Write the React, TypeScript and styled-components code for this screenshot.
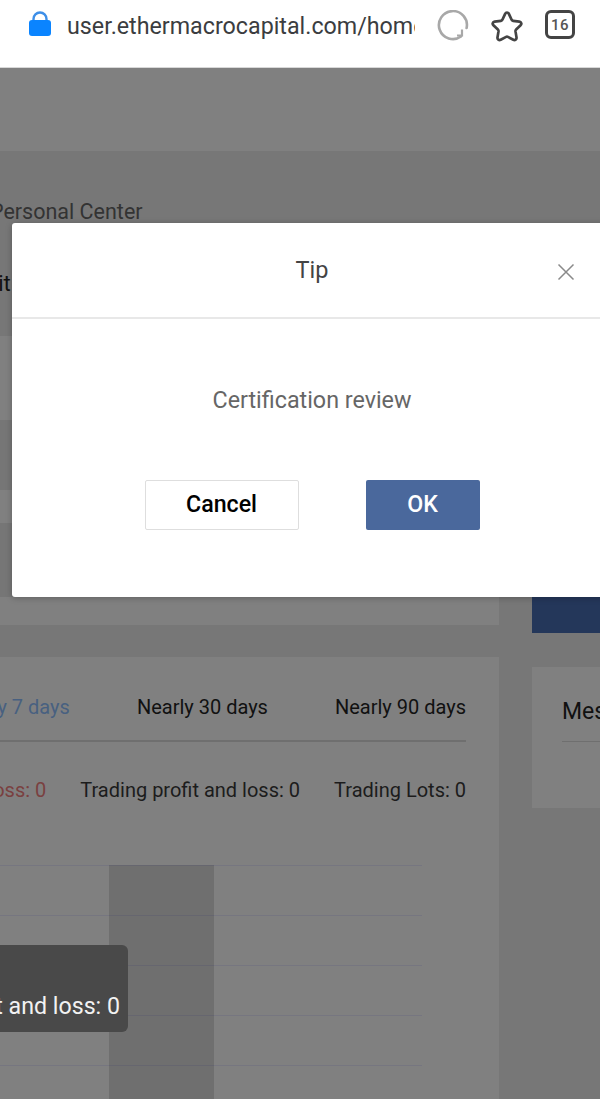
import React from "react";
import styled, { createGlobalStyle } from "styled-components";

const Global = createGlobalStyle`
  html, body { margin: 0; padding: 0; background: #fff; }
  body { font-family: Roboto, "Liberation Sans", sans-serif; width: 600px; height: 1106px; overflow: hidden; }
`;
const Screen = styled.div`
  width: 600px; height: 1106px; display: flex; flex-direction: column; background: #fff; overflow: hidden;
`;
const AddressBar = styled.header`
  height: 68px; flex: none; box-sizing: border-box; display: flex; align-items: flex-start;
  padding: 10px 0 0 28px; background: #fff; border-bottom: 1px solid #d8d8d8;
`;
const LockIcon = styled.svg`flex: none; margin-top: 1px;`;
const UrlText = styled.div`
  width: 348px; margin: 0 2px 0 15px; overflow: hidden; white-space: nowrap;
  font-size: 23.25px; line-height: 33px; color: #3b3d40;
`;
const BarIcon = styled.svg<{ $gap: number }>`
  flex: none; margin-left: ${p => p.$gap}px;
`;
const TabCounter = styled.div`
  flex: none; margin-left: 21px; width: 30px; height: 29px; box-sizing: border-box;
  border: 3px solid #444; border-radius: 6px; display: flex; align-items: center; justify-content: center;
  font-size: 15px; font-weight: 500; color: #555; letter-spacing: .5px;
`;
const Viewport = styled.main`
  position: relative; height: 1031px; flex: none; overflow: hidden; background: #777;
`;
const SiteHeader = styled.div`height: 83px; background: #808080;`;
const Body = styled.div`
  display: grid; grid-template-columns: 499px 68px; column-gap: 33px; padding-top: 47px;
`;
const Left = styled.div`display: flex; flex-direction: column; min-width: 0;`;
const Crumb = styled.div`
  font-size: 21.5px; line-height: 28px; color: #333; margin-left: -10px; white-space: nowrap;
`;
const PageTitle = styled.div`
  font-size: 22px; line-height: 30px; color: #111; margin: 43px 0 0 -15px; white-space: nowrap; height: 67px;
`;
const InfoCard = styled.div`
  height: 289px; background: #808080; display: flex; flex-direction: column;
`;
const InfoRow = styled.div<{ $h: number; $shade?: boolean }>`
  height: ${p => p.$h}px; flex: none; background: ${p => (p.$shade ? "#767676" : "transparent")};
`;
const ChartCard = styled.section`
  margin-top: 32px; height: 460px; padding-right: 33px; background: #808080; position: relative;
`;
const Tabs = styled.div`
  height: 85px; box-sizing: border-box; padding-top: 36px; display: flex; justify-content: flex-end; gap: 67px;
  border-bottom: 2px solid #6f6f6f; font-size: 20px; line-height: 28px; white-space: nowrap;
`;
const Tab = styled.span<{ $active?: boolean }>`
  flex: none; color: ${p => (p.$active ? "#486080" : "#111")};
`;
const Stats = styled.div`
  display: flex; justify-content: flex-end; gap: 34px; padding-top: 34px; font-size: 20px; line-height: 28px; white-space: nowrap;
`;
const Stat = styled.span<{ $loss?: boolean }>`
  flex: none; color: ${p => (p.$loss ? "#7a4040" : "#1c1c1c")};
`;
const Plot = styled.div`
  position: absolute; left: 0; top: 208px; width: 422px; height: 240px;
  display: flex; flex-direction: column;
`;
const GridLine = styled.div`height: 50px; box-sizing: border-box; border-top: 1px solid #767680; flex: none;`;
const Band = styled.div`
  position: absolute; left: 109px; top: 0; width: 105px; height: 240px; background: rgba(0,0,0,.13);
`;
const Tooltip = styled.div`
  position: absolute; left: -20px; top: 80px; width: 148px; height: 87px; box-sizing: border-box;
  border-radius: 6px; background: #494949; color: #f2f2f2; font-size: 23.2px; line-height: 30px;
  display: flex; justify-content: flex-end; align-items: flex-end; padding: 0 8px 11px 0; white-space: nowrap;
`;
const Right = styled.aside`display: flex; flex-direction: column; margin-top: -1px;`;
const ActionSlot = styled.div`height: 436px; display: flex; align-items: flex-end;`;
const DepositButton = styled.div`height: 50px; width: 100%; background: #24375a;`;
const MessageCard = styled.section`
  margin-top: 34px; height: 141px; background: #808080; padding: 30px 0 0 30px; box-sizing: border-box; overflow: hidden;
`;
const MessageTitle = styled.div`
  font-size: 23px; line-height: 30px; color: #111; white-space: nowrap; height: 44px; border-bottom: 1px solid #6f6f6f;
`;
const Dialog = styled.div`
  position: absolute; left: 12px; top: 155px; width: 620px; height: 374px; background: #fff; border-radius: 3px;
  box-shadow: 0 1px 6px rgba(0,0,0,.25);
`;
const DialogHead = styled.div`
  height: 96px; box-sizing: border-box; border-bottom: 2px solid #e8e8e8; position: relative;
  width: 600px; display: flex; justify-content: center; padding: 32px 0 0 0;
  font-size: 23.5px; line-height: 30px; color: #444;
`;
const CloseButton = styled.svg`position: absolute; left: 545px; top: 40px;`;
const Message = styled.div`
  width: 600px; text-align: center; margin-top: 66px; font-size: 23.3px; line-height: 30px; color: #666;
`;
const Actions = styled.div`
  width: 600px; display: flex; justify-content: center; gap: 67px; margin-top: 65px;
`;
const Button = styled.div<{ $primary?: boolean }>`
  height: 50px; box-sizing: border-box; display: flex; align-items: center; justify-content: center; border-radius: 2px;
  padding-bottom: 2px; width: ${p => (p.$primary ? 114 : 154)}px;
  background: ${p => (p.$primary ? "#4a689c" : "#fff")};
  color: ${p => (p.$primary ? "#fff" : "#000")};
  border: ${p => (p.$primary ? "none" : "1px solid #dedede")};
  font-size: 23.2px; font-weight: 500;
`;

export default function App() {
  return (
    <Screen>
      <Global />
      <AddressBar>
        <LockIcon width="24" height="28" viewBox="0 0 24 28">
          <path d="M5.5 11V8a6.5 6.5 0 0 1 13 0v3" fill="none" stroke="#3d8fe8" strokeWidth="2.4" />
          <rect x="1" y="9" width="22" height="16" rx="3" fill="#0a84ff" />
        </LockIcon>
        <UrlText>user.ethermacrocapital.com/home</UrlText>
        <BarIcon $gap={20} width="32" height="32" viewBox="0 0 32 32">
          <path d="M24 26.5A14 14 0 1 1 29.6 18" fill="none" stroke="#a8a8a8" strokeWidth="2.6" strokeLinecap="round" />
          <path d="M25 19.5v6h-5" fill="none" stroke="#a8a8a8" strokeWidth="2.2" />
        </BarIcon>
        <BarIcon $gap={21} width="34" height="32" viewBox="0 0 34 32">
          <path d="M17 2.5c1 0 1.6.7 2 1.6l2.600 5.600c.3.6.8 1 1.500 1.100l6.200.9c2 .3 2.700 2.300 1.300 3.600l-4.500 4.300c-.5.5-.7 1.100-.6 1.800l1 6c.3 1.900-1.500 3.200-3.200 2.300l-5.400-2.800c-.6-.3-1.200-.3-1.800 0l-5.400 2.800c-1.700.9-3.500-.4-3.200-2.300l1-6c.1-.7-.1-1.300-.6-1.800l-4.500-4.300c-1.400-1.300-.7-3.300 1.300-3.600l6.200-.9c.7-.1 1.200-.5 1.500-1.100l2.600-5.600c.4-.9 1-1.600 2-1.600z" fill="none" stroke="#444" strokeWidth="2.7" strokeLinejoin="round" />
        </BarIcon>
        <TabCounter>16</TabCounter>
      </AddressBar>
      <Viewport>
        <SiteHeader />
        <Body>
          <Left>
            <Crumb>Personal Center</Crumb>
            <PageTitle>Tit</PageTitle>
            <InfoCard>
              <InfoRow $h={84} />
              <InfoRow $h={70} $shade />
              <InfoRow $h={33} />
              <InfoRow $h={74} $shade />
            </InfoCard>
            <ChartCard>
              <Tabs>
                <Tab $active>Nearly 7 days</Tab>
                <Tab>Nearly 30 days</Tab>
                <Tab>Nearly 90 days</Tab>
              </Tabs>
              <Stats>
                <Stat $loss>Profit and loss: 0</Stat>
                <Stat>Trading profit and loss: 0</Stat>
                <Stat>Trading Lots: 0</Stat>
              </Stats>
              <Plot>
                <GridLine /><GridLine /><GridLine /><GridLine /><GridLine />
                <Band />
                <Tooltip>t and loss: 0</Tooltip>
              </Plot>
            </ChartCard>
          </Left>
          <Right>
            <ActionSlot><DepositButton /></ActionSlot>
            <MessageCard>
              <MessageTitle>Message</MessageTitle>
            </MessageCard>
          </Right>
        </Body>
        <Dialog>
          <DialogHead>
            Tip
            <CloseButton width="18" height="18" viewBox="0 0 18 18">
              <path d="M1.5 1.5l15 15M16.5 1.5l-15 15" stroke="#8a8a8a" strokeWidth="1.5" />
            </CloseButton>
          </DialogHead>
          <Message>Certification review</Message>
          <Actions>
            <Button>Cancel</Button>
            <Button $primary>OK</Button>
          </Actions>
        </Dialog>
      </Viewport>
    </Screen>
  );
}
